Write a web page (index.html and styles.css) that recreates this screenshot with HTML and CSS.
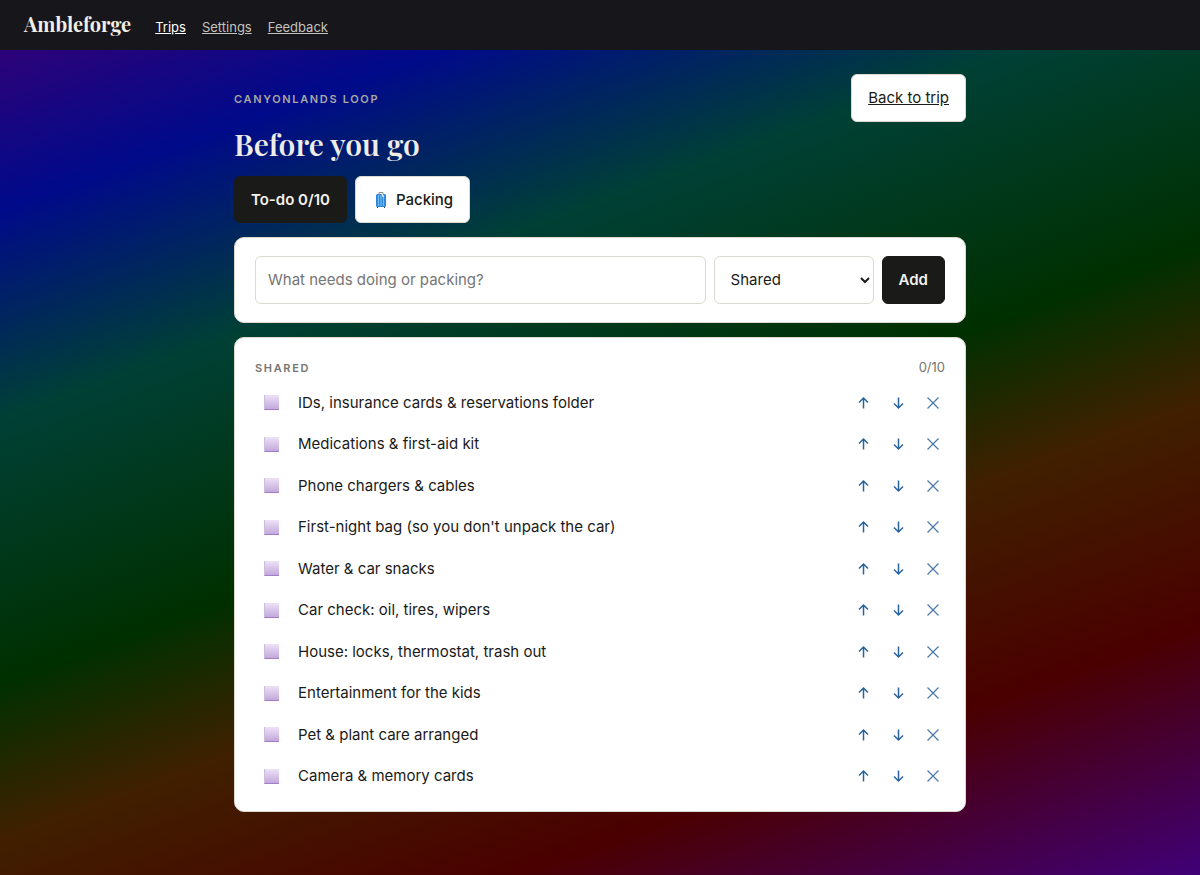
FILE: index.html
```
<!DOCTYPE html>
<html lang="en">
<head>
    <meta charset="UTF-8">
    <meta name="viewport" content="width=device-width, initial-scale=1.0">
    <title>Before you go - Ambleforge</title>
    <link rel="stylesheet" href="styles.css">
</head>
<body>

    <header class="topbar">
        <a class="brand" href="#">Ambleforge</a>
        <nav class="nav">
            <a class="active" href="#">Trips</a>
            <a href="#">Settings</a>
            <a href="#">Feedback</a>
        </nav>
    </header>

    <main class="page">
        <div class="page-head">
            <div>
                <p class="eyebrow">Canyonlands Loop</p>
                <h1>Before you go</h1>
            </div>
            <a class="btn" href="#">Back to trip</a>
        </div>

        <div class="tabs">
            <button class="btn btn-dark" type="button">To-do 0/10</button>
            <button class="btn" type="button">
                <svg class="suitcase" viewBox="0 0 18 18" aria-hidden="true">
                    <path d="M7 3.500V1.500h4V3.500" fill="none" stroke="#8a9299" stroke-width="1"/>
                    <rect x="4" y="3" width="10" height="13" rx="1.500" fill="#2e86da"/>
                    <path d="M6.500 4v11M9 4v11M11.500 4v11" stroke="#74bff7" stroke-width="1.200"/>
                    <path d="M5.500 16v1M12.500 16v1" stroke="#3c4650" stroke-width="1"/>
                    <path d="M10 3l1.500 3" stroke="#dfe8ee" stroke-width="1.500"/>
                </svg>
                Packing
            </button>
        </div>

        <form class="card add-form">
            <input class="field" type="text" placeholder="What needs doing or packing?" aria-label="New item">
            <select class="field" aria-label="List">
                <option>Shared</option>
                <option>Personal</option>
            </select>
            <button class="btn btn-dark" type="button">Add</button>
        </form>

        <section class="card list-card">
            <div class="list-head">
                <h2 class="eyebrow">Shared</h2>
                <span class="count">0/10</span>
            </div>
            <ul class="items" id="items"></ul>
        </section>
    </main>

    <script>
        const items = [
            "IDs, insurance cards & reservations folder",
            "Medications & first-aid kit",
            "Phone chargers & cables",
            "First-night bag (so you don't unpack the car)",
            "Water & car snacks",
            "Car check: oil, tires, wipers",
            "House: locks, thermostat, trash out",
            "Entertainment for the kids",
            "Pet & plant care arranged",
            "Camera & memory cards"
        ];

        const icons = {
            "Move up": "M8.500 13.500V3M4 7.500L8.500 3L13 7.500",
            "Move down": "M8.500 2.500V13M4 8.500L8.500 13L13 8.500",
            "Remove": "M2.500 2.500L13.500 13.500M13.500 2.500L2.500 13.500"
        };

        const list = document.getElementById("items");

        items.forEach((text, i) => {
            const row = document.createElement("li");
            row.className = "item";

            const box = document.createElement("input");
            box.type = "checkbox";
            box.id = "item" + i;

            const label = document.createElement("label");
            label.htmlFor = box.id;
            label.textContent = text;

            row.append(box, label);

            for (const name in icons) {
                const btn = document.createElement("button");
                btn.type = "button";
                btn.className = name === "Remove" ? "icon-btn remove" : "icon-btn";
                btn.setAttribute("aria-label", name);
                btn.innerHTML = `<svg viewBox="0 0 16 16"><path d="${icons[name]}"/></svg>`;
                row.append(btn);
            }

            list.append(row);
        });
    </script>

</body>
</html>
```
FILE: styles.css
```
* {
    box-sizing: border-box;
}

body {
    margin: 0;
    min-height: 100vh;
    font-family: Inter, "Liberation Sans", sans-serif;
    font-size: 15px;
    line-height: 24px;
    color: #1a1a18;
    background: linear-gradient(160deg, #3b0073, #000a8a 16%, #004035 32%, #003000 52%, #402000 64%, #4a0000 81%, #400078) fixed;
}

/* Top bar */
.topbar {
    display: flex;
    align-items: center;
    gap: 24px;
    height: 50px;
    padding: 0 24px;
    background: #17161b;
}

.brand {
    padding-bottom: 2px;
    font-family: "Playfair Display", "Liberation Serif", serif;
    font-size: 20px;
    font-weight: 700;
    color: #f2eee8;
    text-decoration: none;
}

.nav {
    display: flex;
    gap: 16px;
    padding-top: 4px;
    font-size: 13px;
}

.nav a {
    color: #c4c2bc;
}

.nav .active {
    color: #fff;
}

.page {
    display: flex;
    flex-direction: column;
    gap: 14px;
    max-width: 780px;
    margin: 0 auto;
    padding: 24px;
}

.page-head {
    display: flex;
    align-items: flex-start;
    justify-content: space-between;
}

.eyebrow {
    margin: 0;
    font-size: 11px;
    font-weight: 600;
    line-height: 18px;
    letter-spacing: 0.15em;
    text-transform: uppercase;
    color: #a8a6a2;
}

.page-head .eyebrow {
    margin-top: 16px;
}

h1 {
    margin: 18px 0 0;
    font-family: "Playfair Display", "Liberation Serif", serif;
    font-size: 30px;
    font-weight: 600;
    line-height: 36px;
    color: #f0ece6;
}

.btn {
    display: inline-flex;
    align-items: center;
    justify-content: center;
    min-height: 47px;
    padding: 0 16px;
    font: inherit;
    font-weight: 500;
    color: #1a1a18;
    background: #fff;
    border: 1px solid #dcdace;
    border-radius: 6px;
    cursor: pointer;
}

a.btn {
    min-height: 48px;
    font-weight: 400;
}

.btn-dark {
    font-weight: 600;
    color: #f4f2ee;
    background: #1a1a18;
    border-color: #1a1a18;
}

.tabs {
    display: flex;
    gap: 8px;
}

.suitcase {
    width: 18px;
    height: 18px;
    margin-right: 6px;
}

/* Cards */
.card {
    padding: 18px 20px;
    background: #fff;
    border: 1px solid #dcdace;
    border-radius: 10px;
}

.list-card {
    padding-bottom: 14px;
}

.add-form {
    display: flex;
    gap: 8px;
}

.field {
    min-width: 0;
    height: 48px;
    padding: 0 12px 2px;
    font: inherit;
    color: #1a1a18;
    background: #fff;
    border: 1px solid #dcdace;
    border-radius: 6px;
}

input.field {
    flex: 1;
}

select.field {
    width: 160px;
}

.list-head {
    display: flex;
    align-items: flex-start;
    justify-content: space-between;
    min-height: 24px;
}

.list-head .eyebrow {
    margin-top: 3px;
    color: #77756c;
}

.count {
    font-size: 13px;
    line-height: 22px;
    color: #77756c;
}

/* Checklist */
.items {
    margin: 2px 0 0;
    padding: 0;
    list-style: none;
}

.item {
    display: flex;
    align-items: center;
    min-height: 41px;
}

.item:nth-child(even) {
    min-height: 42px;
}

.item input {
    appearance: none;
    width: 15px;
    height: 15px;
    margin: 0 19px 0 9px;
    background: linear-gradient(#eee2f7, #c2a8dc);
    border-bottom: 1px solid #a57bc8;
    border-left: 1px solid #cdbcdc;
}

.item input:checked {
    background: #8a55b5;
}

.item label {
    flex: 1;
}

.icon-btn {
    display: flex;
    justify-content: center;
    width: 35px;
    padding: 8px 0;
    background: none;
    border: 0;
    cursor: pointer;
}

.icon-btn:last-child {
    width: 24px;
    margin-left: 6px;
}

.icon-btn svg {
    width: 16px;
    height: 16px;
    fill: none;
    stroke: #2a639c;
    stroke-width: 1.5;
}

.icon-btn.remove svg {
    stroke: #4a78aa;
    stroke-width: 1.2;
}
```
